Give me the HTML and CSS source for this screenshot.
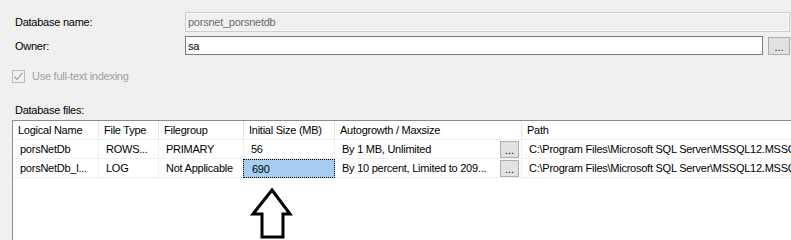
FILE: index.html
```html
<!DOCTYPE html>
<html>
<head>
<meta charset="utf-8">
<link rel="stylesheet" href="styles.css">
</head>
<body>
<div class="page">
  <div class="form">
    <div class="label">Database name:</div>
    <div class="field disabled wide">porsnet_porsnetdb</div>
    <div class="label">Owner:</div>
    <div class="field">sa</div>
    <div class="btn owner-btn">...</div>
  </div>

  <div class="check-row">
    <svg class="check" width="13" height="13" viewBox="0 0 13 13">
      <rect x="0.5" y="0.5" width="12" height="12" fill="#f0f0f0" stroke="#bcbcbc"/>
      <polyline points="2.5,6.5 5,9.5 10.5,2.8" fill="none" stroke="#a8a8a8" stroke-width="1.2"/>
    </svg>
    <span class="check-label">Use full-text indexing</span>
  </div>

  <div class="section-label">Database files:</div>

  <div class="table">
    <div class="row head">
      <div class="cell">Logical Name</div>
      <div class="cell">File Type</div>
      <div class="cell">Filegroup</div>
      <div class="cell">Initial Size (MB)</div>
      <div class="cell">Autogrowth / Maxsize</div>
      <div class="cell">Path</div>
    </div>
    <div class="row">
      <div class="cell">porsNetDb</div>
      <div class="cell">ROWS...</div>
      <div class="cell">PRIMARY</div>
      <div class="cell">56</div>
      <div class="cell grow"><span>By 1 MB, Unlimited</span><span class="btn cell-btn">...</span></div>
      <div class="cell">C:\Program Files\Microsoft SQL Server\MSSQL12.MSSQLSERVER\MSSQL\DATA\porsNetDb.mdf</div>
    </div>
    <div class="row">
      <div class="cell">porsNetDb_l...</div>
      <div class="cell">LOG</div>
      <div class="cell">Not Applicable</div>
      <div class="cell selected">690</div>
      <div class="cell grow"><span>By 10 percent, Limited to 209...</span><span class="btn cell-btn">...</span></div>
      <div class="cell">C:\Program Files\Microsoft SQL Server\MSSQL12.MSSQLSERVER\MSSQL\DATA\porsNetDb_log.ldf</div>
    </div>
  </div>

  <svg class="arrow" width="44" height="53" viewBox="0 0 44 53">
    <polygon points="22,3 40,27 33,27 33,50 12,50 12,27 3,27" fill="#ffffff" stroke="#000000" stroke-width="3" stroke-linejoin="miter"/>
  </svg>
</div>
</body>
</html>
```

FILE: styles.css
```css
html, body {
  margin: 0;
  padding: 0;
  background: #f0f0f0;
  overflow: hidden;
}

.page {
  position: relative;
  width: 791px;
  height: 240px;
  overflow: hidden;
  padding-top: 12px;
  box-sizing: border-box;
  font-family: "Liberation Sans", Arial, sans-serif;
  font-size: 11px;
  letter-spacing: -0.25px;
  color: #000;
}

.form {
  display: grid;
  grid-template-columns: 165px 578px 22px;
  grid-template-rows: 20px 19px;
  column-gap: 5px;
  row-gap: 4px;
  padding-left: 15px;
  align-items: center;
}

.label {
  line-height: 14px;
}

.field {
  height: 100%;
  box-sizing: border-box;
  border: 1px solid #7a7a7a;
  background: #fff;
  padding-left: 2px;
  display: flex;
  align-items: center;
}

.field.wide {
  grid-column: 2 / span 2;
}

.field.disabled {
  border-color: #cccccc;
  background: #f0f0f0;
  box-shadow: inset 0 0 0 1px #f7f7f7;
  color: #6d6d6d;
}

.btn {
  box-sizing: border-box;
  border: 1px solid #adadad;
  background: #e1e1e1;
  display: flex;
  justify-content: center;
  align-items: flex-end;
  line-height: 12px;
  letter-spacing: 0;
}

.owner-btn {
  height: 18px;
  color: #2a1a6e;
  padding-bottom: 1px;
}

.check-row {
  margin-top: 15px;
  margin-left: 12px;
  height: 13px;
  display: flex;
  align-items: center;
  gap: 7px;
}

.check {
  display: block;
  flex: none;
}

.check-label {
  color: #a0a0a0;
  line-height: 13px;
}

.section-label {
  margin-top: 20px;
  margin-left: 15px;
  line-height: 14px;
}

.table {
  margin-top: 3px;
  margin-left: 12px;
  width: 900px;
  height: 140px;
  background: #fff;
  border-left: 1px solid #8a8a8a;
  border-top: 1px solid #8a8a8a;
}

.row {
  display: grid;
  grid-template-columns: 86px 60px 85px 91px 187px 390px;
  height: 19px;
}

.cell {
  box-sizing: border-box;
  border-right: 1px solid #f0f0f0;
  border-bottom: 1px solid #f0f0f0;
  padding-left: 7px;
  display: flex;
  align-items: center;
  white-space: nowrap;
  overflow: hidden;
}

.head .cell {
  padding-left: 5px;
  border-right-color: #e5e5e5;
}

.cell.grow {
  justify-content: space-between;
  padding-right: 2px;
}

.cell-btn {
  width: 19px;
  height: 17px;
  flex: none;
  color: #000;
  padding-bottom: 1px;
}

.cell.selected {
  margin-left: -1px;
  padding-left: 8px;
  background: #a6cef0;
  border: 1px dotted #000;
}

.arrow {
  position: absolute;
  left: 250px;
  top: 187px;
  display: block;
}
```
